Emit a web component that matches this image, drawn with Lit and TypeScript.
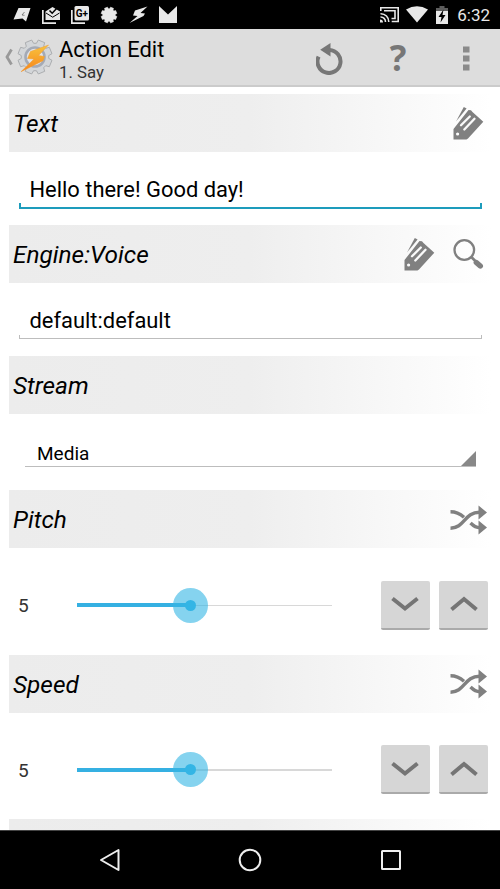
import { LitElement, css, html, svg } from "lit";
import { customElement, property } from "lit/decorators.js";
import { classMap } from "lit/directives/class-map.js";

const icon = (width: number, height: number, content: unknown) => html`
    <svg width=${width} height=${height} viewBox="0 0 ${width} ${height}" fill="currentColor">${content}</svg>
`;

const gearPath = (cx: number, cy: number, outer: number, inner: number) => {
    const points: string[] = [];
    for (let i = 0; i < 8; i++) {
        const a = (i * Math.PI) / 4 + Math.PI / 8;
        [[-0.29, inner], [-0.2, outer], [0.2, outer], [0.29, inner]].forEach(([d, r]) => {
            points.push(`${(cx + Math.cos(a + d) * r).toFixed(2)},${(cy + Math.sin(a + d) * r).toFixed(2)}`);
        });
    }
    return `M${points.join('L')}Z`;
};

const icons = {
    tags: icon(32, 34, svg`
        <path d="M11.8 1 14.600 2.600 4 15.500z"/>
        <path fill-rule="evenodd" d="M1.500 33.500V23L16.500 4l2.500.200 1.500 1.800 10.800 9.700L16 32.500 14.500 33.500zM5.600 26.400a1.600 1.600 0 1 0 0 3.200 1.600 1.600 0 0 0 0-3.200z"/>
        <path d="M17.800 10.500 9 19.300M22.500 12.800 12.300 23.500" stroke="#f9f9f9" stroke-width="2.300" stroke-linecap="round"/>
    `),
    search: icon(32, 32, svg`
        <circle cx="12.300" cy="12" r="9.800" fill="none" stroke="currentColor" stroke-width="2.300"/>
        <path d="m19.300 19 4 4" stroke="currentColor" stroke-width="2.600"/>
        <path d="m24.300 24.500 4 3.500" stroke="currentColor" stroke-width="5.400" stroke-linecap="round"/>
    `),
    shuffle: icon(38, 30, svg`
        <g fill="none" stroke="currentColor" stroke-width="3.400">
            <path d="M.500 6.800c6 0 9 1.600 13.500 5.500M20.500 18c3 3 5.500 4.700 9.500 4.700"/>
            <path d="M.500 23.200c14 0 14-16 29-16"/>
        </g>
        <path d="M28.500 .500v14l8.500-7zM28.500 15.500v14l8.500-7z"/>
    `),
    down: icon(28, 16, svg`<path d="m1.500 2.500 12.500 10 12.500-10" fill="none" stroke="currentColor" stroke-width="4"/>`),
    up: icon(28, 16, svg`<path d="m1.500 13.500 12.500-10.500 12.500 10.500" fill="none" stroke="currentColor" stroke-width="4"/>`),
    undo: icon(28, 35, svg`
        <path d="M2.600 16.600A11.500 11.500 0 1 0 13.500 10" fill="none" stroke="currentColor" stroke-width="4"/>
        <path d="M4.200 9.800 14.500 3v13.500z"/>
    `),
    more: icon(7, 25, svg`<path d="M0 .500h6.500v6H0zM0 9.500h6.500v6H0zM0 18.500h6.500v6H0z"/>`),
    back: icon(8, 18, svg`<path d="M6.500 1.500 2 9l4.500 7.500" fill="none" stroke="currentColor" stroke-width="2.800"/>`),
    app: icon(36, 36, svg`
        <defs>
            <linearGradient id="bolt" x1="0" y1="0" x2="0" y2="1">
                <stop offset="0" stop-color="#f7c43f"/>
                <stop offset="1" stop-color="#f7841a"/>
            </linearGradient>
        </defs>
        <path d=${gearPath(18, 18, 17.3, 13.8)} fill="#d3d6d9" stroke="#a0a2a4" stroke-width=".8"/>
        <circle cx="18" cy="18" r="9.500" fill="#e2e4e8" stroke="#a4aab6" stroke-width="2.600"/>
        <path d="M31.500 6 13.500 12.500 10.500 19.500l6.500.500L4 32.700l22-11 1.500-4.200-6-1z" fill="url(#bolt)" stroke="#f09c30" stroke-width=".5"/>
    `),
};

const statusIcons = {
    flag: icon(18, 16, svg`
        <path d="M5.500 1h12L13 14.500 9.500 11.500 .500 12.500z"/>
        <path d="M11.500 5 9 8l2.500.3" fill="none" stroke="#555" stroke-width=".7"/>
    `),
    inbox: icon(18, 18, svg`
        <path d="M0 4h1.700v12.300H14V18H0z"/>
        <path d="M3.500 5.500 10.500 1 18 5.500V14H3.500z"/>
        <path d="m4 7 6.700 4.200L17.500 7" fill="none" stroke="#000" stroke-width="1"/>
        <path d="m7.500 4.500 2.700 2.700L15 2" fill="none" stroke="#000" stroke-width="1.500"/>
    `),
    plus: icon(18, 18, svg`
        <path d="M0 4h1.700v12.300H14V18H0z"/>
        <rect x="3.500" width="14.500" height="14.500" rx="1.500"/>
        <text x="4.800" y="10.800" font-size="10" font-weight="700" fill="#000">G+</text>
    `),
    gear: icon(18, 18, svg`<path d=${gearPath(9, 9, 8, 6.3)} stroke="currentColor" stroke-width=".6" stroke-linejoin="round"/>`),
    bolt: icon(19, 18, svg`<path d="M18.500 .500 6 4.500 4 9.500l4.500.500L.500 17 14.500 10l1.500-2.500-4.500-.5z"/>`),
    mail: icon(18, 17, svg`<path d="M0 0 9 8.500 18 0v17H0z"/>`),
    cast: icon(19, 16, svg`
        <g fill="none" stroke="currentColor" stroke-width="1.600">
            <path d="M.8 4V.8h17.400v13.700h-6.500M.5 6.700a8 8 0 0 1 8.300 8.300M.5 10a4.800 4.800 0 0 1 5 5"/>
            <path d="M4 3.800h11v7.700h-3.500"/>
        </g>
        <path d="M0 12.500A3 3 0 0 1 3 15.500H0z"/>
    `),
    wifi: icon(22, 17, svg`<path d="M0 3.500Q11-3 22 3.500L11 16.500z"/>`),
    battery: icon(12, 18, svg`
        <path d="M3.500 0h5v2H12v3.500H0V2h3.500z" opacity=".4"/>
        <path d="M0 5h12v13H0z"/>
        <path d="M7.500 3.500 2.500 11h3l-1 5.500L9.500 9h-3z" fill="#000"/>
    `),
};

const sharedStyles = css`
    svg {
        display: block;
        flex: none;
    }
`;

@customElement('status-bar')
export class StatusBar extends LitElement {

    static styles = [sharedStyles, css`
        :host {
            display: flex;
            justify-content: space-between;
            height: 29px;
            box-sizing: border-box;
            padding: 0 10px 0 13px;
            background: #000;
            color: #e8e8e8;
        }

        .group {
            display: flex;
            align-items: center;
            gap: 11px;
        }

        .group.right {
            gap: 7.5px;
        }

        .time {
            font-size: 17px;
            line-height: 29px;
            padding-top: 2px;
            margin-left: 2px;
        }
    `];

    render() {
        return html`
            <div class="group">
                ${statusIcons.flag}${statusIcons.inbox}${statusIcons.plus}
                ${statusIcons.gear}${statusIcons.bolt}${statusIcons.mail}
            </div>
            <div class="group right">
                ${statusIcons.cast}${statusIcons.wifi}${statusIcons.battery}
                <div class="time">6:32</div>
            </div>
        `;
    }
}

@customElement('action-bar')
export class ActionBar extends LitElement {

    static styles = [sharedStyles, css`
        :host {
            display: flex;
            align-items: center;
            height: 58px;
            box-sizing: border-box;
            padding: 0 30px 0 5px;
            background: #ddd;
            border-bottom: 2px solid #cbcbcb;
            color: #777;
        }

        .back {
            color: #999;
            margin-right: 4px;
        }

        .titles {
            flex: 1;
            margin-left: 6px;
            padding-top: 6px;
        }

        .title {
            font-size: 21.9px;
            line-height: 24px;
            color: #000;
        }

        .subtitle {
            font-size: 16.8px;
            line-height: 21px;
            color: #333;
        }

        .actions {
            display: flex;
            align-items: center;
        }

        .help {
            width: 20px;
            margin: 0 55px 0 44px;
            padding-top: 1px;
            font: 700 35px/56px "Open Sans", sans-serif;
            text-align: center;
        }

        .more {
            padding-top: 2px;
            color: #8a8a8a;
        }
    `];

    render() {
        return html`
            <div class="back">${icons.back}</div>
            ${icons.app}
            <div class="titles">
                <div class="title">Action Edit</div>
                <div class="subtitle">1. Say</div>
            </div>
            <div class="actions">
                ${icons.undo}
                <div class="help">?</div>
                <div class="more">${icons.more}</div>
            </div>
        `;
    }
}

@customElement('section-header')
export class SectionHeader extends LitElement {

    static styles = [sharedStyles, css`
        :host {
            display: flex;
            align-items: center;
            justify-content: space-between;
            height: 58px;
            box-sizing: border-box;
            padding: 0 7px 0 4px;
            background: linear-gradient(90deg, #ececec 0, #eee 50%, #fff 100%);
            color: #808080;
        }

        .label {
            font-size: 24.4px;
            line-height: 58px;
            padding-top: 2px;
            font-style: italic;
            color: #000;
        }

        .icons {
            display: flex;
            align-items: center;
            gap: 17px;
        }

        .icons.wide {
            margin-right: -4px;
            padding-top: 1px;
        }
    `];

    @property({ type: String })
    label = '';

    @property({ attribute: false })
    icons: (keyof typeof icons)[] = [];

    render() {
        return html`
            <div class="label">${this.label}</div>
            <div class=${classMap({ 'icons': true, 'wide': this.icons.includes('shuffle') })}>
                ${this.icons.map((name) => icons[name])}
            </div>
        `;
    }
}

@customElement('text-field')
export class TextField extends LitElement {

    static styles = css`
        :host {
            display: block;
            height: 73px;
            box-sizing: border-box;
            padding: 20px 9px 0 10px;
        }

        .value {
            font-size: 21.9px;
            line-height: 36px;
            padding-left: 10.5px;
        }

        .underline {
            height: 4px;
            margin-top: -4px;
            box-sizing: border-box;
            border: 1px solid #bdbdbd;
            border-top: none;
        }

        .underline.focused {
            height: 6px;
            margin-top: -5px;
            border: 2px solid #1d9cbc;
            border-top: none;
        }
    `;

    @property({ type: String })
    value = '';

    @property({ type: Boolean })
    focused = false;

    render() {
        return html`
            <div class="value">${this.value}</div>
            <div class=${classMap({ 'underline': true, 'focused': this.focused })}></div>
        `;
    }
}

@customElement('spinner-field')
export class SpinnerField extends LitElement {

    static styles = css`
        :host {
            display: block;
            height: 76px;
            box-sizing: border-box;
            padding: 24px 15px 0 16px;
        }

        .spinner {
            display: flex;
            align-items: flex-end;
            justify-content: space-between;
            height: 28px;
            padding-left: 12px;
            border-bottom: 1px solid #bdbdbd;
            font-size: 19px;
            line-height: 25px;
        }

        .corner {
            width: 15px;
            height: 15px;
            background: #888;
            clip-path: polygon(100% 0, 100% 100%, 0 100%);
        }
    `;

    @property({ type: String })
    value = '';

    render() {
        return html`
            <div class="spinner">
                <div>${this.value}</div>
                <div class="corner"></div>
            </div>
        `;
    }
}

@customElement('slider-row')
export class SliderRow extends LitElement {

    static styles = [sharedStyles, css`
        :host {
            display: flex;
            align-items: center;
            height: 106.5px;
            box-sizing: border-box;
            padding: 8px 3px 0 9px;
        }

        .value {
            width: 59px;
            font-size: 19px;
            line-height: 24px;
            padding-top: 2px;
            box-sizing: border-box;
            color: #333;
        }

        .slider {
            display: flex;
            align-items: center;
            width: 255px;
            margin-right: 48.5px;
        }

        .filled {
            height: 4px;
            background: #35b0e2;
        }

        .thumb {
            flex: none;
            display: flex;
            align-items: center;
            width: 35px;
            height: 35px;
            margin: 0 -17.5px;
            border-radius: 50%;
            background: rgba(51, 181, 229, 0.6);
            z-index: 1;
        }

        .dot {
            width: 11px;
            height: 11px;
            margin: auto;
            border-radius: 50%;
            background: #33b5e5;
        }

        .rest {
            flex: 1;
            height: 1.5px;
            background: #d8d8d8;
        }

        .button {
            display: flex;
            align-items: center;
            justify-content: center;
            width: 49px;
            height: 49px;
            box-sizing: border-box;
            border-radius: 2px;
            border-bottom: 2px solid #aaa;
            background: #d6d6d6;
            color: #757575;
        }

        .button + .button {
            margin-left: 9.5px;
        }
    `];

    @property({ type: Number })
    value = 0;

    @property({ type: Number })
    percent = 0;

    render() {
        return html`
            <div class="value">${this.value}</div>
            <div class="slider">
                <div class="filled" style="width: ${this.percent}%"></div>
                <div class="thumb"><div class="dot"></div></div>
                <div class="rest"></div>
            </div>
            <div class="button">${icons.down}</div>
            <div class="button">${icons.up}</div>
        `;
    }
}

@customElement('nav-bar')
export class NavBar extends LitElement {

    static styles = [sharedStyles, css`
        :host {
            display: flex;
            align-items: center;
            justify-content: space-between;
            height: 59px;
            box-sizing: border-box;
            padding: 0 98.5px;
            background: #000;
            border-top: 1px solid #444;
            color: #eee;
        }
    `];

    render() {
        return html`
            ${icon(22, 24, svg`<path d="M19.500 2v20L2 12z" fill="none" stroke="currentColor" stroke-width="2" stroke-linejoin="round"/>`)}
            ${icon(24, 24, svg`<circle cx="12" cy="12" r="10.300" fill="none" stroke="currentColor" stroke-width="2"/>`)}
            ${icon(22, 24, svg`<rect x="2" y="3" width="18" height="18" rx=".5" fill="none" stroke="currentColor" stroke-width="2"/>`)}
        `;
    }
}

@customElement('app-root')
export class AppRoot extends LitElement {

    static styles = css`
        :host {
            display: flex;
            flex-direction: column;
            width: 500px;
            height: 889px;
            overflow: hidden;
            background: #fff;
            color: #000;
            font-family: Roboto, "Noto Sans", sans-serif;
        }

        .content {
            flex: 1;
            min-height: 0;
            overflow: hidden;
            padding: 7px 9px 0;
        }
    `;

    render() {
        return html`
            <status-bar></status-bar>
            <action-bar></action-bar>
            <div class="content">
                <section-header label="Text" .icons=${['tags']}></section-header>
                <text-field value="Hello there! Good day!" focused></text-field>
                <section-header label="Engine:Voice" .icons=${['tags', 'search']}></section-header>
                <text-field value="default:default"></text-field>
                <section-header label="Stream"></section-header>
                <spinner-field value="Media"></spinner-field>
                <section-header label="Pitch" .icons=${['shuffle']}></section-header>
                <slider-row .value=${5} .percent=${44.5}></slider-row>
                <section-header label="Speed" .icons=${['shuffle']}></section-header>
                <slider-row .value=${5} .percent=${44.5}></slider-row>
                <section-header></section-header>
            </div>
            <nav-bar></nav-bar>
        `;
    }
}

declare global {
    interface HTMLElementTagNameMap {
        'app-root': AppRoot;
    }
}
